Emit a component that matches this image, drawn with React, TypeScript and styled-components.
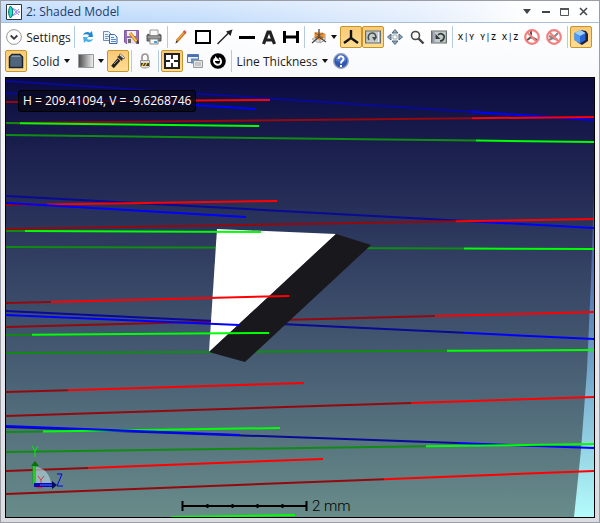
import React from "react";
import styled, { createGlobalStyle } from "styled-components";

const GlobalStyle = createGlobalStyle`
  *, *::before, *::after { box-sizing: border-box; }
  body { margin: 0; }
  button { font: inherit; color: inherit; }
`;

const Window = styled.section`
  display: flex;
  flex-direction: column;
  width: 100%;
  height: 100vh;
  min-height: 320px;
  border: 1px solid #9a9ca6;
  background: linear-gradient(#fdfdfe 0%, #f0f0f4 50%, #dadce2 100%);
  font-family: "Open Sans", "Noto Sans", sans-serif;
  font-size: 12px;
  color: #1c1c24;
  overflow: hidden;
`;

const TitleBar = styled.header`
  display: flex;
  align-items: center;
  flex: none;
  height: 22px;
  padding: 0 8px 0 5px;
  gap: 4px;
  border-bottom: 1px solid #a9c0da;
  background:
    linear-gradient(rgba(255, 255, 255, 0.35), rgba(255, 255, 255, 0)),
    linear-gradient(90deg, #b8d6fb 0%, #c5defc 35%, #e4eefd 70%, #fdfeff 88%);
`;

const Title = styled.h1`
  flex: 1;
  margin: 0;
  font-size: 12px;
  font-weight: 400;
  line-height: 20px;
  color: #1e3c6e;
  white-space: nowrap;
`;

const CaptionButton = styled.button`
  display: grid;
  place-items: center;
  width: 15px;
  height: 20px;
  padding: 0;
  border: 0;
  background: none;
`;

const Toolbars = styled.div`
  display: flex;
  flex-direction: column;
  flex: none;
  gap: 2px;
  padding: 3px 4px 5px;
  background: linear-gradient(#ffffff, #f8f9fc);
`;

const Toolbar = styled.div`
  display: flex;
  align-items: center;
  height: 22px;
`;

const ToolButton = styled.button<{ $active?: boolean; $width?: number }>`
  display: flex;
  align-items: center;
  justify-content: center;
  gap: 4px;
  flex: none;
  width: ${(p) => p.$width ?? 22}px;
  height: 22px;
  padding: 0;
  border: 1px solid ${(p) => (p.$active ? "#c4962c" : "transparent")};
  border-radius: 2px;
  background: ${(p) => (p.$active ? "linear-gradient(#fbc976, #ffdc94)" : "none")};
  white-space: nowrap;

  svg { flex: none; }
`;

const Separator = styled.span`
  flex: none;
  width: 1px;
  height: 22px;
  margin: 0 2px;
  background: #b7cbe0;
`;

const Viewport = styled.main`
  position: relative;
  flex: 1;
  min-height: 0;
  margin: 0 4px 4px;
  border: 1px solid #000;
  background: #34405f;
`;

const Scene = styled.svg`
  display: block;
  width: 100%;
  height: 100%;
`;

const Readout = styled.output`
  position: absolute;
  top: 12px;
  left: 12px;
  padding: 0 4px;
  border: 1px solid #000;
  border-radius: 3px;
  background: rgba(8, 8, 26, 0.82);
  color: #fff;
  line-height: 20px;
  white-space: nowrap;
`;

const Caret = () => (
  <svg width="6" height="4" viewBox="0 0 6 4"><path d="M0 0h6L3 4z" fill="#111" /></svg>
);

const Icon = ({ children, size = 16 }: { children: React.ReactNode; size?: number }) => (
  <svg width={size} height={size} viewBox="0 0 16 16" fill="none" aria-hidden="true">{children}</svg>
);

const AppIcon = () => (
  <Icon>
    <path d="M.5.5h15v15H.5z" fill="#fff" stroke="#333" />
    <path d="M6 4l8 4-8 4M6 4l7 7M6 12l7-7" stroke="#9c90f4" />
    <path d="M4.500 2c3 3 3 9 0 12-2.500-3-2.500-9 0-12z" fill="#20e0c8" stroke="#066" />
  </Icon>
);
const ExpandIcon = () => (
  <Icon><circle cx="8" cy="8" r="7.400" fill="#fdfdfd" stroke="#999" /><path d="M4.700 6.500L8 9.800l3.300-3.300" stroke="#333" strokeWidth="1.800" /></Icon>
);
const RefreshIcon = () => (
  <Icon>
    <path d="M3 6c1-3 5-4 7-2l2-2 1 6H8l1-2C7 5 5 5 3 6z" fill="#2088d4" />
    <path d="M13 10c-1 3-5 4-7 2l-2 2-1-6h5l-1 2c2 1 4 1 6 0z" fill="#48b0ea" />
  </Icon>
);
const CopyIcon = () => (
  <Icon>
    <path d="M1.500 2.500h5l2.500 2.500v6.500H1.500z" fill="#e8f2fc" stroke="#6c8cbc" /><path d="M3 5.500h3M3 7.500h4M3 9.500h3" stroke="#6c9cd0" />
    <path d="M7.500 5.500h5l2.500 2.500v6.500h-7.500z" fill="#eef6ff" stroke="#3c64a4" /><path d="M9 8.500h3M9 10.500h5M9 12.500h5" stroke="#5088cc" />
  </Icon>
);
const SaveIcon = () => (
  <Icon>
    <path d="M.5 1.500h14v13H2l-1.500-1.500z" fill="#9670b4" stroke="#8058a0" /><path d="M3 2h9v5H3z" fill="#f3edf8" />
    <path d="M3 9h9v6H3z" fill="#e3e0e8" /><path d="M4 10h3v4H4z" fill="#666" />
    <path d="M6 4l7 9" stroke="#c87c20" strokeWidth="3" /><path d="M6 4l7 9" stroke="#ffc84c" strokeWidth="1.500" /><path d="M12 13l3 2-1-4z" fill="#333" />
  </Icon>
);
const PrintIcon = () => (
  <Icon>
    <path d="M4 1h8v6H4z" fill="#f8f8f8" stroke="#999" /><path d="M1 6l2-1v2h10V5l2 1v6H1z" fill="#777" stroke="#555" />
    <path d="M2 8h12" stroke="#bbb" /><path d="M4 10h8v5H4z" fill="#fafafa" stroke="#888" /><path d="M8 13h3" stroke="#48a0d0" strokeWidth="2" />
  </Icon>
);
const PencilIcon = () => (
  <Icon><path d="M4 12l8-9" stroke="#c87820" strokeWidth="3" /><path d="M4.500 11l7-8" stroke="#ffbd58" strokeWidth="1" /><path d="M11 4l1.500-2" stroke="#d45a48" strokeWidth="3" /><path d="M2.500 14.500l.7-3 2 1.600z" fill="#333" /></Icon>
);
const RectIcon = () => <Icon><path d="M1 2h14v12H1z" stroke="#000" strokeWidth="2" /></Icon>;
const ArrowIcon = () => <Icon><path d="M.5 15L12 3.500" stroke="#222" strokeWidth="1.500" /><path d="M15.500.500l-2 6.500-4.500-4.500z" fill="#222" /></Icon>;
const LineIcon = () => <Icon><path d="M0 8.500h16" stroke="#000" strokeWidth="3" /></Icon>;
const TextIcon = () => <Icon><path d="M2.500 15L7 3h2l4.500 12M4.500 11h7" stroke="#222" strokeWidth="3.200" /></Icon>;
const DimensionIcon = () => <Icon><path d="M1.500 2v12M14.500 2v12M1 8h14" stroke="#000" strokeWidth="3" /></Icon>;
const PlanesIcon = () => (
  <Icon>
    <path d="M1 10l6-3 6 3-6 4z" fill="#ccc" opacity=".7" stroke="#999" /><path d="M9 8l5-3v6l-5 3z" fill="#eee" stroke="#999" />
    <path d="M3.500 3l10 1v5l-5 2-5-2z" fill="#f09028" /><path d="M4 4l8 5M12 4L4 9" stroke="#80604c" />
    <path d="M8 0v8l-7 6M8 8l7 5" stroke="#444" strokeWidth="1.300" />
  </Icon>
);
const TripodIcon = () => <Icon><path d="M8 1v8L1 14M8 9l7 5" stroke="#111" strokeWidth="2.400" /></Icon>;
const PanelFrame = () => <path d="M.6 2h14.800v12H.6z" fill="#c4ccca" stroke="#66706f" strokeWidth="1.200" />;
const RotateIcon = () => (
  <Icon><PanelFrame /><path d="M4 11c-2-3 0-7 3-7s4 2 4 5" stroke="#454c4e" strokeWidth="1.500" /><path d="M7 8h5l-2.500 4z" fill="#454c4e" /><path d="M13.500 3v10" stroke="#eef" /></Icon>
);
const UndoIcon = () => (
  <Icon><PanelFrame /><path d="M1.500 3v10M3 3v10" stroke="#889" /><path d="M7 6c3-3 7 0 6 3-.5 2-2 3-4 3" stroke="#303838" strokeWidth="1.600" /><path d="M4.500 5v5h5z" fill="#303838" /></Icon>
);
const MoveIcon = () => (
  <Icon>
    <g fill="#90a8bc" stroke="#4e6880"><path d="M8 .500L11 4H5zM8 15.500L5 12h6zM.500 8L4 5v6zM15.500 8L12 11V5z" /></g>
    <path d="M6 6h4v4H6z" fill="#fff" stroke="#9aa" />
  </Icon>
);
const ZoomIcon = () => <Icon><circle cx="6.500" cy="6.500" r="4" fill="#fafafa" stroke="#484848" strokeWidth="1.600" /><path d="M9.500 9.500l5 5" stroke="#444" strokeWidth="2.400" /></Icon>;

const PlaneLabel = styled.span`
  display: flex;
  gap: 1px;
  font-family: "Open Sans", sans-serif;
  font-size: 8px;
  font-weight: 600;
  line-height: 10px;
  color: #111;
`;

const Forbidden = () => <><circle cx="8" cy="8" r="6.800" stroke="#f28080" strokeWidth="2.200" /><path d="M3 3l10 10" stroke="#f28080" strokeWidth="2.200" /></>;
const NoAxesIcon = () => <Icon><path d="M7 2v6l-5 4M7 8l6 3" stroke="#555" strokeWidth="2" /><Forbidden /></Icon>;
const NoRotateIcon = () => <Icon><path d="M3 7l4 2 5-5M7 9l5 2M3 11l4-2" stroke="#888" strokeWidth="2" /><Forbidden /></Icon>;
const CubeIcon = () => (
  <Icon><path d="M8 1l5 1 2 3v7l-6 4-5-3z" fill="#223" /><path d="M1.500 4L7.500 1l5 3v7l-5.500 3.500L1.500 11z" fill="#2868d0" /><path d="M1.500 4L7.500 1l5 3L7 7z" fill="#9cd0ff" /><path d="M1.500 4L7 7v7.500L1.500 11z" fill="#4c9cf4" /></Icon>
);
const SolidIcon = () => (
  <Icon><path d="M4 1.500h8l2.500 2.500v10.500h-13V4z" fill="#4f667c" stroke="#1c242c" strokeWidth="1.500" /><path d="M4 2.500h8l1 1.500H3z" fill="#8498a8" /></Icon>
);
const FlashlightIcon = () => (
  <Icon><path d="M2.500 14L9 6.500" stroke="#222" strokeWidth="3.500" /><path d="M4 11l4-4" stroke="#999" /><path d="M7 4l5 4 1-3-3-3z" fill="#333" /><path d="M9 2l5 4 .5-1.500L10.500 1z" fill="#fff" stroke="#444" strokeWidth=".7" /></Icon>
);
const LockIcon = () => (
  <Icon><path d="M5 8V4c0-4 6-4 6 0v4" stroke="#999" strokeWidth="1.700" /><path d="M3.500 7.500h9v6c-2 2-7 2-9 0z" fill="#ddd" stroke="#999" /><path d="M4 10h8v3H4z" fill="#443d24" /><path d="M5 13l2-3M8 13l2-3" stroke="#f0c830" strokeWidth="1.300" /></Icon>
);
const FitIcon = () => (
  <Icon><path d="M1 1h14v14H1z" fill="#fff" stroke="#222" strokeWidth="2" /><path d="M8 1v5M8 10v5M1 8h5M10 8h5" stroke="#222" strokeWidth="1.800" /></Icon>
);
const WindowsIcon = () => (
  <Icon>
    <path d="M.500 1.500h11v8H.500z" fill="#eaf2fc" stroke="#5878b0" /><path d="M1 2h10v2H1z" fill="#4870b8" />
    <path d="M4 5.500h8v5H4z" fill="#6888b8" /><path d="M6.500 7.500h9v7h-9z" fill="#e4e4e4" stroke="#999" /><path d="M8 10h6M8 12h6" stroke="#aaa" />
  </Icon>
);
const RecycleIcon = () => (
  <Icon><circle cx="8" cy="8" r="7.800" fill="#000" /><path d="M5 5.500C2 10 7 13 10 11c2-2 1-5-1-6" stroke="#fff" strokeWidth="1.900" /><path d="M5 3v5h5z" fill="#fff" /></Icon>
);
const HelpIcon = () => (
  <Icon><circle cx="8" cy="8" r="7.200" fill="#3056b4" stroke="#8898b8" strokeWidth="1.400" /><path d="M3 5c3-4 7-4 10 0v3c-4 2-7 1-10 0z" fill="#5078cc" /><path d="M5.500 6c0-4 5.500-3 5 0C10 8 8 8 8 10.500M8 12v2" stroke="#fff" strokeWidth="2" /></Icon>
);
const GradientIcon = () => (
  <Icon><defs><linearGradient id="shade"><stop stopColor="#4a4a4a" /><stop offset="1" stopColor="#f4f4f4" /></linearGradient></defs><path d="M.500 1.500h15v13H.500z" fill="url(#shade)" stroke="#999" /></Icon>
);

type Hue = "r" | "g" | "b";
/* hue, x1, y1, x2, y2, x where the ray turns bright */
type Ray = [Hue, number, number, number, number, number];

const dark: Record<Hue, string> = { r: "#920a0e", g: "#108c14", b: "#0a0a94" };
const bright: Record<Hue, string> = { r: "#ff0000", g: "#00ff00", b: "#0000ff" };

const farRays: Ray[] = [
  ["b", 6, 81, 594, 120, 470],
  ["r", 6, 123, 594, 117, 472],
  ["g", 6, 135, 594, 142, 476],
  ["b", 6, 196, 594, 228, 470],
  ["r", 6, 229, 594, 219, 456],
  ["g", 6, 247, 594, 249, 464],
  ["r", 6, 327, 594, 312, 435],
  ["b", 6, 311, 594, 339, 464],
  ["g", 6, 353, 594, 350, 447],
  ["r", 6, 416, 594, 397, 411],
  ["b", 6, 427, 594, 448, 457],
  ["g", 6, 452, 594, 444, 426],
  ["r", 6, 494, 594, 471, 384],
];

const nearRays: Ray[] = [
  ["b", 6, 93, 256, 109, 100],
  ["r", 6, 102, 270, 100, 40],
  ["g", 6, 123, 259, 126, 20],
  ["r", 6, 205, 277, 201, 47],
  ["b", 6, 203, 246, 217, 8],
  ["g", 6, 231, 261, 232, 25],
  ["r", 6, 303, 289, 296, 51],
  ["b", 6, 315, 239, 325, 6],
  ["g", 6, 335, 269, 333, 32],
  ["r", 6, 392, 304, 383, 68],
  ["g", 6, 432, 280, 428, 43],
  ["b", 6, 426, 240, 435, 6],
  ["r", 6, 471, 323, 459, 88],
  ["g", 171, 517, 295, 515, 171],
];

const Rays = ({ rays }: { rays: Ray[] }) => (
  <g strokeWidth="2">
    {rays.map(([hue, x1, y1, x2, y2, turn], i) => {
      const ym = y1 + ((y2 - y1) * (turn - x1)) / (x2 - x1);
      return (
        <g key={i}>
          <path d={`M${x1} ${y1}L${turn} ${ym}`} stroke={dark[hue]} />
          <path d={`M${turn} ${ym}L${x2} ${y2}`} stroke={bright[hue]} />
        </g>
      );
    })}
  </g>
);

const Gizmo = () => (
  <g fill="none">
    <path d="M35 485V467C44 467 51 475 51 485z" fill="#b4d4dc" opacity=".65" />
    <path d="M36 487a4 3 0 0 0 7 0z" fill="#f02828" />
    <path d="M38 476l3 4 3-4M41 480v5" stroke="#d83838" />
    <path d="M34 484V466" stroke="#08a008" strokeWidth="3" /><path d="M34 484V466" stroke="#48f048" />
    <path d="M31 466l4-5 4 5z" fill="#087008" />
    <path d="M34 485h18" stroke="#0808c0" strokeWidth="4" /><path d="M40 485h12" stroke="#5070ff" />
    <path d="M52 481l5 4-5 4z" fill="#080860" />
    <path d="M32 446l3 5 3-5M35 451v6" stroke="#00f000" />
    <path d="M57 474h5l-5 12h6" stroke="#0000f0" />
  </g>
);

const ScaleBar = () => (
  <g stroke="#000" strokeWidth="2">
    <path d="M182 506H307" />
    <path d="M182.500 501v10M306.500 501v10M207.500 504v4M232.500 504v4M257.500 504v4M282.500 504v4" />
    <text x="312" y="511" stroke="none" fill="#000" fontFamily="Roboto, sans-serif" fontSize="15" fontWeight="300">2 mm</text>
  </g>
);

const Model = () => (
  <Scene viewBox="6 78 588 439" preserveAspectRatio="xMidYMid slice" role="img" aria-label="Shaded model">
    <defs>
      <linearGradient id="sky" x1="0" y1="0" x2="0" y2="1">
        <stop stopColor="#0b0b40" /><stop offset=".25" stopColor="#232a55" />
        <stop offset=".65" stopColor="#475d73" /><stop offset="1" stopColor="#688c8a" />
      </linearGradient>
      <linearGradient id="edge" x1="0" y1="0" x2="0" y2="1">
        <stop stopColor="#3c489c" /><stop offset=".5" stopColor="#6c9cc4" /><stop offset="1" stopColor="#b4fcfc" />
      </linearGradient>
    </defs>
    <path d="M6 78h588v439H6z" fill="url(#sky)" />
    <path d="M594 190L591 280L587 370L581 450L574 517H594z" fill="url(#edge)" />
    <Rays rays={farRays} />
    <path d="M217 229L336 234L209 352z" fill="#fff" />
    <path d="M336 234L371 245L245 362L209 352z" fill="#19191d" />
    <Rays rays={nearRays} />
    <ScaleBar />
    <Gizmo />
  </Scene>
);

const Tool = ({ label, active, children }: { label: string; active?: boolean; children: React.ReactNode }) => (
  <ToolButton type="button" aria-label={label} $active={active} aria-pressed={active}>{children}</ToolButton>
);

const PlaneTool = ({ a, b }: { a: string; b: string }) => (
  <ToolButton type="button"><PlaneLabel><span>{a}</span><span>|</span><span>{b}</span></PlaneLabel></ToolButton>
);

export default function App() {
  return (
    <>
      <GlobalStyle />
      <Window>
        <TitleBar>
          <AppIcon />
          <Title>2: Shaded Model</Title>
          <CaptionButton type="button" aria-label="Window menu"><svg width="8" height="5"><path d="M0 0h8L4 5z" fill="#444" /></svg></CaptionButton>
          <CaptionButton type="button" aria-label="Minimize"><svg width="8" height="3"><path d="M0 2h8" stroke="#444" strokeWidth="2" /></svg></CaptionButton>
          <CaptionButton type="button" aria-label="Maximize"><svg width="9" height="8" fill="none"><path d="M.5 1v6.500h8V1" stroke="#555" /><path d="M0 1h9" stroke="#555" strokeWidth="2" /></svg></CaptionButton>
          <CaptionButton type="button" aria-label="Close"><svg width="9" height="9"><path d="M1 1l7 7M8 1L1 8" stroke="#444" strokeWidth="1.500" /></svg></CaptionButton>
        </TitleBar>
        <Toolbars>
          <Toolbar role="toolbar" aria-label="View tools">
            <ToolButton type="button" $width={67}><ExpandIcon />Settings</ToolButton>
            <Separator />
            <Tool label="Refresh"><RefreshIcon /></Tool>
            <Tool label="Copy"><CopyIcon /></Tool>
            <Tool label="Save"><SaveIcon /></Tool>
            <Tool label="Print"><PrintIcon /></Tool>
            <Separator />
            <Tool label="Draw"><PencilIcon /></Tool>
            <Tool label="Rectangle"><RectIcon /></Tool>
            <Tool label="Arrow"><ArrowIcon /></Tool>
            <Tool label="Line"><LineIcon /></Tool>
            <Tool label="Text"><TextIcon /></Tool>
            <Tool label="Dimension"><DimensionIcon /></Tool>
            <Separator />
            <ToolButton type="button" aria-label="Planes" $width={33}><PlanesIcon /><Caret /></ToolButton>
            <Tool label="Axes" active><TripodIcon /></Tool>
            <Tool label="Rotate" active><RotateIcon /></Tool>
            <Tool label="Pan"><MoveIcon /></Tool>
            <Tool label="Zoom"><ZoomIcon /></Tool>
            <Tool label="Reset view"><UndoIcon /></Tool>
            <Separator />
            <PlaneTool a="X" b="Y" />
            <PlaneTool a="Y" b="Z" />
            <PlaneTool a="X" b="Z" />
            <Tool label="Hide axes"><NoAxesIcon /></Tool>
            <Tool label="Hide rays"><NoRotateIcon /></Tool>
            <Separator />
            <Tool label="Solid view" active><CubeIcon /></Tool>
          </Toolbar>
          <Toolbar role="toolbar" aria-label="Display tools">
            <Tool label="Shading" active><SolidIcon /></Tool>
            <ToolButton type="button" $width={48}>Solid<Caret /></ToolButton>
            <ToolButton type="button" aria-label="Background" $width={32}><GradientIcon /><Caret /></ToolButton>
            <Tool label="Lighting" active><FlashlightIcon /></Tool>
            <Separator />
            <Tool label="Lock"><LockIcon /></Tool>
            <Separator />
            <Tool label="Fit" active><FitIcon /></Tool>
            <ToolButton type="button" aria-label="Windows" $width={24}><WindowsIcon /></ToolButton>
            <Tool label="Auto update"><RecycleIcon /></Tool>
            <Separator />
            <ToolButton type="button" $width={96}>Line Thickness<Caret /></ToolButton>
            <Tool label="Help"><HelpIcon /></Tool>
          </Toolbar>
        </Toolbars>
        <Viewport>
          <Model />
          <Readout>H = 209.41094, V = -9.6268746</Readout>
        </Viewport>
      </Window>
    </>
  );
}
